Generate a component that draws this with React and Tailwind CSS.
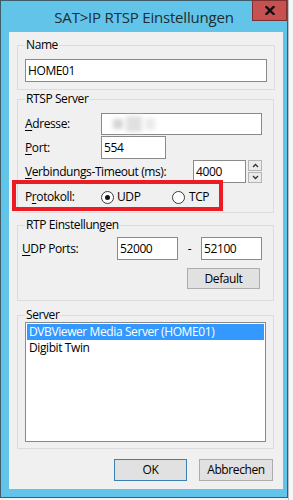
import React from "react";

function Field({ className = "", children }) {
  return (
    <div className={"h-[23px] border border-[#8a8a8a] bg-white px-[2px] flex items-center leading-none " + className}>
      {children}
    </div>
  );
}

function Radio({ checked }) {
  return (
    <div className="w-[13px] h-[13px] rounded-full border border-[#3a3a3a] bg-white flex items-center justify-center shrink-0">
      {checked && <div className="w-[5px] h-[5px] rounded-full bg-[#111]" />}
    </div>
  );
}

function Btn({ className = "", children }) {
  return (
    <div className={"bg-[#e1e1e1] border flex items-center justify-center " + className}>{children}</div>
  );
}

export default function App() {
  return (
    <div className="w-[293px] h-[500px] bg-[#f2f2f2] flex items-start font-['Open_Sans','Noto_Sans',sans-serif] text-[12px] text-black tracking-[-0.4px]">
      <div className="w-[288px] h-[498px] border border-[#3f5c69] bg-[#62c4e9] flex flex-col shrink-0">
        {/* title bar */}
        <div className="h-[31px] flex items-start">
          <div className="w-[35px] shrink-0" />
          <div className="flex-1 h-[31px] flex items-center justify-center text-[15px] text-[#1e2d33] tracking-[-0.2px] pt-[1px]">
            SAT&gt;IP RTSP Einstellungen
          </div>
          <div className="w-[35px] h-[21px] -mt-[1px] bg-[#c75050] border border-[#7e3030] flex items-center justify-center shrink-0">
            <svg width="10" height="9" viewBox="0 0 10 9">
              <path d="M1.5 1 L8.5 8 M8.5 1 L1.5 8" stroke="#111" strokeWidth="2.4" strokeLinecap="square" />
            </svg>
          </div>
        </div>
        {/* client */}
        <div className="ml-[8px] w-[274px] h-[457px] bg-[#f0f0f0] flex flex-col relative">
          {/* Name */}
          <fieldset className="mt-[6px] ml-[8px] w-[257px] border border-[#dcdcdc] px-[7px] pb-[7px]">
            <legend className="px-[1px] leading-[14px]">Name</legend>
            <Field className="mt-[7px] w-[242px]">HOME01</Field>
          </fieldset>

          {/* RTSP Server */}
          <fieldset className="mt-[2px] ml-[8px] w-[257px] border border-[#dcdcdc] px-[7px] pb-[7px]">
            <legend className="px-[1px] leading-[14px]">RTSP Server</legend>
            <div className="mt-[7px] flex items-center h-[22px]">
              <div className="w-[76px]"><span className="underline underline-offset-[2px]">A</span>dresse:</div>
              <div className="w-[161px] h-[22px] border border-[#8a8a8a] bg-white flex items-center pl-[11px] gap-[3px]">
                <div className="w-[10px] h-[10px] bg-[#d4d4d4] blur-[2px]" />
                <div className="w-[16px] h-[16px] bg-[#e0e0e0] blur-[2px]" />
                <div className="w-[10px] h-[12px] bg-[#ebebeb] blur-[2px]" />
              </div>
            </div>
            <div className="mt-[1px] flex items-center h-[23px]">
              <div className="w-[76px]"><span className="underline underline-offset-[2px]">P</span>ort:</div>
              <Field className="w-[65px]">554</Field>
            </div>
            <div className="mt-[1px] flex items-center h-[23px]">
              <div className="w-[168px]"><span className="underline underline-offset-[2px]">V</span>erbindungs-Timeout (ms):</div>
              <Field className="w-[53px]">4000</Field>
              <div className="ml-[2px] w-[14px] h-[23px] flex flex-col gap-[1px]">
                <div className="flex-1 bg-[#ececec] border border-[#b4b4b4] flex items-center justify-center">
                  <svg width="7" height="5" viewBox="0 0 7 5"><path d="M1 4 L3.5 1.5 L6 4" stroke="#333" strokeWidth="1.3" fill="none" /></svg>
                </div>
                <div className="flex-1 bg-[#ececec] border border-[#b4b4b4] flex items-center justify-center">
                  <svg width="7" height="5" viewBox="0 0 7 5"><path d="M1 1 L3.5 3.5 L6 1" stroke="#333" strokeWidth="1.3" fill="none" /></svg>
                </div>
              </div>
            </div>
            <div className="mt-[6px] flex items-center h-[16px]">
              <div className="w-[76px]">P<span className="underline underline-offset-[2px]">r</span>otokoll:</div>
              <div className="w-[71px] flex items-center gap-[3px]">
                <Radio checked />
                <span>UDP</span>
              </div>
              <div className="flex items-center gap-[4px]">
                <Radio />
                <span>TCP</span>
              </div>
            </div>
          </fieldset>

          {/* RTP Einstellungen */}
          <fieldset className="mt-[5px] ml-[8px] w-[257px] border border-[#dcdcdc] px-[7px] pb-[11px]">
            <legend className="px-[1px] leading-[14px]">RTP Einstellungen</legend>
            <div className="mt-[5px] flex items-center h-[23px]">
              <div className="-ml-[3px] w-[95px]"><span className="underline underline-offset-[2px]">U</span>DP Ports:</div>
              <Field className="w-[61px]">52000</Field>
              <div className="w-[23px] text-center">-</div>
              <Field className="w-[61px]">52100</Field>
            </div>
            <Btn className="mt-[8px] ml-[162px] w-[73px] h-[21px] border-[#adadad]">Default</Btn>
          </fieldset>

          {/* Server */}
          <fieldset className="mt-[7px] ml-[8px] w-[257px] border border-[#dcdcdc] px-[7px] pb-[6px]">
            <legend className="px-[1px] leading-[14px]">Server</legend>
            <div className="w-[241px] h-[120px] border border-[#8a8a8a] bg-white p-[1px] flex flex-col">
              <div className="h-[16px] leading-[16px] bg-[#3399ff] text-white px-[2px] whitespace-nowrap">DVBViewer Media Server (HOME01)</div>
              <div className="h-[16px] leading-[16px] px-[2px] whitespace-nowrap">Digibit Twin</div>
            </div>
          </fieldset>

          {/* Buttons */}
          <div className="mt-[10px] pr-[10px] flex justify-end gap-[12px]">
            <Btn className="w-[73px] h-[22px] border-[#3c7fb1]">OK</Btn>
            <Btn className="w-[74px] h-[22px] border-[#adadad]">Abbrechen</Btn>
          </div>

          {/* red annotation box */}
          <div className="absolute left-[3px] top-[148px] w-[211px] h-[31px] border-[4px] border-[#ed1c24]" />
        </div>
      </div>
      <div className="flex-1 h-[500px] bg-[#f7f7f7] border-l border-[#bdbdbd]" />
    </div>
  );
}
